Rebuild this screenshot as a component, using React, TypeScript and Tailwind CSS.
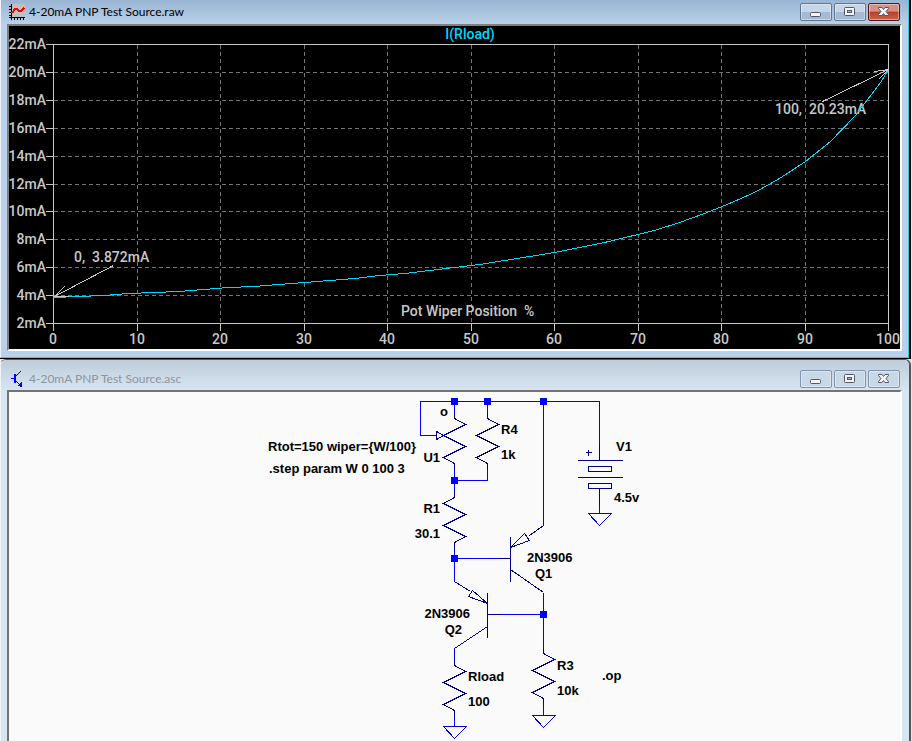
import React from 'react'

interface Point {
  x: number
  y: number
}

interface ResistorProps extends Point {
  flip?: boolean
}

interface LabelProps extends Point {
  children: string
  anchor?: 'start' | 'middle' | 'end'
}

interface WindowProps {
  title: string
  icon: React.ReactNode
  children: React.ReactNode
}

const X_TICKS = [0, 10, 20, 30, 40, 50, 60, 70, 80, 90, 100]
const Y_TICKS = [22, 20, 18, 16, 14, 12, 10, 8, 6, 4, 2]

const toX = (wiper: number) => Math.round(53 + wiper * 8.35)
const toY = (milliamps: number) => Math.round(323 - (milliamps - 2) * 13.95)

// Wiper runs from 0 to 100 in steps of 3, plus the end point
const STEPS = [...Array.from({ length: 34 }, (_, i) => i * 3), 100]

const loadCurrent = (wiper: number) => {
  const pot = 150 * (1 - wiper / 100)
  const resistance = 30.1 + (pot * 1000) / (pot + 1000)
  const vbe = 0.6215 - 0.000125 * wiper
  return (vbe / resistance) * 1000
}

const trace = STEPS.map((wiper) => `${toX(wiper)},${toY(loadCurrent(wiper))}`).join(' ')

const PlotIcon = () => (
  <svg viewBox="0 0 16 16" className="h-4 w-4 shrink-0" shapeRendering="crispEdges" aria-hidden="true">
    <rect x="2" y="0" width="14" height="14" fill="#c0c0c0" />
    <path
      d="M2.5 0V14M0 13.5H16M0 2.5H2M0 5.5H2M0 8.5H2M0 11.5H2M2.5 14V16M5.5 14V16M8.5 14V16M11.5 14V16M14.5 14V16"
      stroke="#000"
      fill="none"
    />
    <path d="M3 9L6 5H8L10 7H12L15 4" stroke="#f00" strokeWidth="2" fill="none" />
  </svg>
)

const TransistorIcon = () => (
  <svg viewBox="0 0 16 16" className="h-4 w-4 shrink-0" shapeRendering="crispEdges" aria-hidden="true">
    <path d="M2 7.5H6M12 0L6 6M6 9L12 15" stroke="#00f" fill="none" />
    <path d="M6 3V12" stroke="#00f" strokeWidth="2" />
    <path d="M13 16V11L8 15Z" fill="#00f" />
  </svg>
)

const MinimizeGlyph = () => (
  <svg viewBox="0 0 12 12" className="h-3 w-3" aria-hidden="true">
    <rect x="0.5" y="6.5" width="10" height="4" rx="1" fill="#f4f4f4" stroke="#535666" />
  </svg>
)

const RestoreGlyph = () => (
  <svg viewBox="0 0 12 12" className="h-3 w-3" aria-hidden="true">
    <rect x="0.5" y="1.5" width="10" height="8" rx="1" fill="#f4f4f4" stroke="#535666" />
    <rect x="3.5" y="4.5" width="4" height="2" fill="#a9bdd6" stroke="#535666" />
  </svg>
)

const CloseGlyph = () => (
  <svg viewBox="0 0 12 12" className="h-3 w-3" aria-hidden="true">
    <path
      d="M0.5 1.5H4L5.5 3.5L7 1.5H10.5V2.5L8 5.5L10.5 8.5V9.5H7L5.5 7.5L4 9.5H0.5V8.5L3 5.5L0.5 2.5Z"
      fill="#f4f4f4"
      stroke="#535666"
    />
  </svg>
)

const CaptionButtons = ({ active }: { active: boolean }) => {
  const frame = 'flex h-[18px] w-8 items-center justify-center rounded-[2px] border shadow-[inset_0_0_0_1px_#ffffff66]'
  const plain = active
    ? 'border-[#5f7590] bg-linear-to-b from-[#c6d6e8] from-50% to-[#a4bbd4] to-50%'
    : 'border-[#8292ae] bg-[#c9d8e7]'
  const close = active
    ? 'border-[#4b1721] bg-linear-to-b from-[#d98f82] from-45% via-[#b93d28] via-50% to-[#c9644c]'
    : plain

  return (
    <div className="flex gap-[2px]">
      <button type="button" aria-label="Minimize" className={`${frame} ${plain}`}>
        <MinimizeGlyph />
      </button>
      <button type="button" aria-label="Restore" className={`${frame} ${plain}`}>
        <RestoreGlyph />
      </button>
      <button type="button" aria-label="Close" className={`${frame} ${close}`}>
        <CloseGlyph />
      </button>
    </div>
  )
}

const PlotWindow = ({ title, icon, children }: WindowProps) => (
  <section className="mr-px border-r-2 border-b border-black bg-[#b9d1ea]">
    <div className="border-r border-b border-l border-b-[#3cc8e0] border-l-[#eef4fa] border-r-[#3cc8e0] pr-[6px] pb-[6px] pl-[6px]">
      <header className="-mx-[6px] flex h-6 items-center gap-1 bg-linear-to-b from-[#9ab5d3] to-[#b9d1ea] pr-2 pl-2">
        {icon}
        <h2 className="grow text-[12px] text-black">{title}</h2>
        <CaptionButtons active />
      </header>
      <div className="border-t-2 border-r-2 border-b-2 border-l-2 border-t-[#808080] border-r-white border-b-white border-l-[#808080] bg-black">
        {children}
      </div>
    </div>
  </section>
)

const SchematicWindow = ({ title, icon, children }: WindowProps) => (
  <section className="mr-px rounded-t-md border-t border-r-2 border-t-[#555] border-r-[#555] bg-[#d7e4f2]">
    <div className="border-l border-l-[#eef4fa] pr-[7px] pl-[6px]">
      <header className="-mr-[7px] -ml-[6px] flex h-[30px] items-center gap-1 rounded-t-md bg-linear-to-b from-[#bfcddb] to-[#d7e4f2] pt-2 pr-[9px] pl-2">
        {icon}
        <h2 className="grow text-[12px] text-[#8e959c]">{title}</h2>
        <CaptionButtons active={false} />
      </header>
      <div className="border-t-2 border-r-2 border-l-2 border-t-[#737373] border-r-white border-l-[#737373] bg-[#fafafa]">
        {children}
      </div>
    </div>
  </section>
)

const Plot = () => (
  <svg viewBox="9 26 891 323" className="block h-auto w-full font-['Roboto',sans-serif] text-[14px] font-medium" role="img">
    <title>I(Rload) against pot wiper position</title>
    <g stroke="#757575" strokeDasharray="4 3" shapeRendering="crispEdges">
      {X_TICKS.slice(1, -1).map((tick) => (
        <line key={tick} x1={toX(tick) + 0.5} x2={toX(tick) + 0.5} y1="45" y2="323" />
      ))}
      {Y_TICKS.slice(1, -1).map((tick) => (
        <line key={tick} x1="54" x2="888" y1={toY(tick) + 0.5} y2={toY(tick) + 0.5} />
      ))}
    </g>
    <g stroke="#c8c8c8" fill="none" shapeRendering="crispEdges">
      <rect x="53.5" y="44.5" width="835" height="279" />
      {X_TICKS.map((tick) => (
        <line key={tick} x1={toX(tick) + 0.5} x2={toX(tick) + 0.5} y1="323" y2="331" />
      ))}
      {Y_TICKS.map((tick) => (
        <line key={tick} x1="46" x2="54" y1={toY(tick) + 0.5} y2={toY(tick) + 0.5} />
      ))}
    </g>
    <g fill="#c8c8c8">
      {X_TICKS.map((tick) => (
        <text key={tick} x={toX(tick)} y="344" textAnchor="middle">
          {tick}
        </text>
      ))}
      {Y_TICKS.map((tick) => (
        <text key={tick} x="46" y={toY(tick) + 5} textAnchor="end">
          {`${tick}mA`}
        </text>
      ))}
      <text x="74" y="262" className="whitespace-pre">
        {'0,  3.872mA'}
      </text>
      <text x="775" y="114" className="whitespace-pre">
        {'100,  20.23mA'}
      </text>
      <text x="401" y="316" className="whitespace-pre">
        {'Pot Wiper Position  %'}
      </text>
    </g>
    <text x="470" y="39" textAnchor="middle" fill="#00d7ff">
      I(Rload)
    </text>
    <g transform="translate(0.5 0.5)" fill="none" shapeRendering="crispEdges">
      <polyline points={trace} stroke="#00d7ff" />
      <path d="M113 265L54 296M64 286L54 296L68 296M822 101L888 69M874 71L888 69L878 79" stroke="#c8c8c8" />
    </g>
  </svg>
)

const Resistor = ({ x, y, flip = false }: ResistorProps) => (
  <path
    transform={`translate(${x} ${y})${flip ? ' scale(-1 1)' : ''}`}
    d="M0 -6V0L11 6L-11 17L11 28L-11 39L0 45V51"
    stroke="#00008b"
  />
)

const Ground = ({ x, y }: Point) => <path d={`M${x - 11} ${y}H${x + 12}L${x} ${y + 12}Z`} stroke="#0000e0" />

const Junction = ({ x, y }: Point) => <rect x={x - 3} y={y - 3} width="7" height="7" fill="#00f" />

const Label = ({ x, y, anchor = 'start', children }: LabelProps) => (
  <text x={x} y={y} textAnchor={anchor}>
    {children}
  </text>
)

const Schematic = () => (
  <svg viewBox="9 392 891 349" className="block h-auto w-full font-['Liberation_Sans',sans-serif] text-[13px] font-bold" role="img">
    <title>4-20mA PNP current source</title>
    <g transform="translate(0.5 0.5)" fill="none" shapeRendering="crispEdges">
      <path
        d="M599 443V401H420V435H436M454 401V413M487 401V413M543 401V525M454 468V491M454 480H487V468M454 547V581M454 558H500M498 614H543M543 592V648M454 648V660M454 715V726M543 704V715M599 502V513"
        stroke="#00f"
      />

      <Resistor x={454} y={418} />
      <Resistor x={487} y={418} />
      <Resistor x={454} y={497} flip />
      <Resistor x={454} y={665} />
      <Resistor x={543} y={653} />
      <path d="M436 431V439L443 435Z" stroke="#00008b" />

      {/* Q1 */}
      <path d="M498 558H510M510 536V581M510 569L543 592M543 525L529 535M510 547L524 533L529 540Z" stroke="#00008b" />
      {/* Q2 */}
      <path d="M500 614H487M487 592V637M487 626L454 648M454 581L470 591M487 603L472 590L468 596Z" stroke="#00008b" />
      {/* V1 */}
      <path
        d="M599 443V460M577 460H622M588 466H611V471H588ZM577 477H622M588 483H611V488H588ZM599 488V504M585 452H591M588 449V455"
        stroke="#00008b"
      />

      <Ground x={599} y={513} />
      <Ground x={454} y={726} />
      <Ground x={543} y={715} />
    </g>
    <g shapeRendering="crispEdges">
      <Junction x={454} y={401} />
      <Junction x={487} y={401} />
      <Junction x={543} y={401} />
      <Junction x={454} y={480} />
      <Junction x={454} y={558} />
      <Junction x={543} y={614} />
    </g>
    <g fill="#000">
      <Label x={268} y={451}>{'Rtot=150 wiper={W/100}'}</Label>
      <Label x={269} y={473}>.step param W 0 100 3</Label>
      <Label x={440} y={416}>o</Label>
      <Label x={440} y={462} anchor="end">U1</Label>
      <Label x={501} y={434}>R4</Label>
      <Label x={501} y={459}>1k</Label>
      <Label x={616} y={451}>V1</Label>
      <Label x={614} y={502}>4.5v</Label>
      <Label x={440} y={513} anchor="end">R1</Label>
      <Label x={440} y={538} anchor="end">30.1</Label>
      <Label x={527} y={562}>2N3906</Label>
      <Label x={535} y={578}>Q1</Label>
      <Label x={470} y={618} anchor="end">2N3906</Label>
      <Label x={462} y={634} anchor="end">Q2</Label>
      <Label x={468} y={681}>Rload</Label>
      <Label x={468} y={706}>100</Label>
      <Label x={557} y={670}>R3</Label>
      <Label x={557} y={695}>10k</Label>
      <Label x={602} y={680}>.op</Label>
    </g>
  </svg>
)

export default function App() {
  return (
    <main className="bg-[#e8e8e8] font-['Lato',sans-serif]">
      <PlotWindow title="4-20mA PNP Test Source.raw" icon={<PlotIcon />}>
        <Plot />
      </PlotWindow>
      <SchematicWindow title="4-20mA PNP Test Source.asc" icon={<TransistorIcon />}>
        <Schematic />
      </SchematicWindow>
    </main>
  )
}
